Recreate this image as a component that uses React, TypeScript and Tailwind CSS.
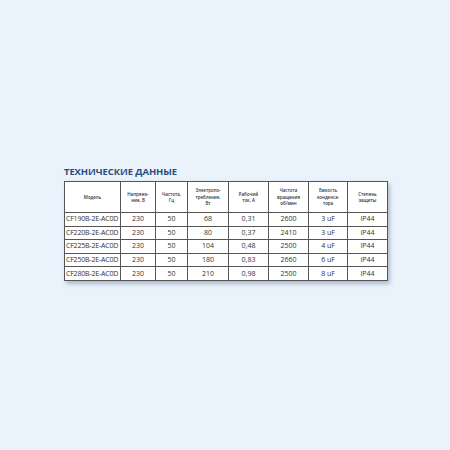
const headers = [
  ["Модель"],
  ["Напряже-", "ние, В"],
  ["Частота,", "Гц"],
  ["Электропо-", "требление,", "Вт"],
  ["Рабочий", "ток, А"],
  ["Частота", "вращения", "об/мин"],
  ["Емкость", "конденса-", "тора"],
  ["Степень", "защиты"],
];

const widths = [56, 35, 32, 41, 40, 40, 39, 40];

const rows = [
  ["CF190B-2E-AC0D", "230", "50", "68", "0,31", "2600", "3 uF", "IP44"],
  ["CF220B-2E-AC0D", "230", "50", "80", "0,37", "2410", "3 uF", "IP44"],
  ["CF225B-2E-AC0D", "230", "50", "104", "0,48", "2500", "4 uF", "IP44"],
  ["CF250B-2E-AC0D", "230", "50", "180", "0,83", "2660", "6 uF", "IP44"],
  ["CF280B-2E-AC0D", "230", "50", "210", "0,98", "2500", "8 uF", "IP44"],
];

export default function App() {
  return (
    <div
      className="w-[450px] h-[450px] bg-[#eaf3fc] pl-[64px] pt-[166px]"
      style={{ fontFamily: '"Open Sans", "Liberation Sans", sans-serif' }}
    >
      <h2 className="text-[9.5px] leading-[12px] font-bold text-[#2f4d7c] tracking-[-0.1px] mb-[3px]">
        ТЕХНИЧЕСКИЕ ДАННЫЕ
      </h2>
      <table className="border-collapse bg-white shadow-[2px_3px_4px_rgba(40,60,90,0.3)] text-[#333]">
        <thead>
          <tr className="h-[31px]">
            {headers.map((h, i) => (
              <th
                key={i}
                style={{ width: widths[i] }}
                className="border border-[#555] border-b-[1.5px] p-0 text-[4.4px] leading-[6.5px] font-semibold text-center align-middle"
              >
                {h.map((line) => (
                  <div key={line}>{line}</div>
                ))}
              </th>
            ))}
          </tr>
        </thead>
        <tbody>
          {rows.map((r) => (
            <tr key={r[0]} className="h-[13.6px]">
              {r.map((c, i) => (
                <td
                  key={i}
                  className={
                    "border border-[#555] p-0 text-[7px] leading-[8px] align-middle whitespace-nowrap " +
                    (i === 0 ? "text-left pl-[1px] tracking-[-0.2px]" : "text-center")
                  }
                >
                  {c}
                </td>
              ))}
            </tr>
          ))}
        </tbody>
      </table>
    </div>
  );
}
